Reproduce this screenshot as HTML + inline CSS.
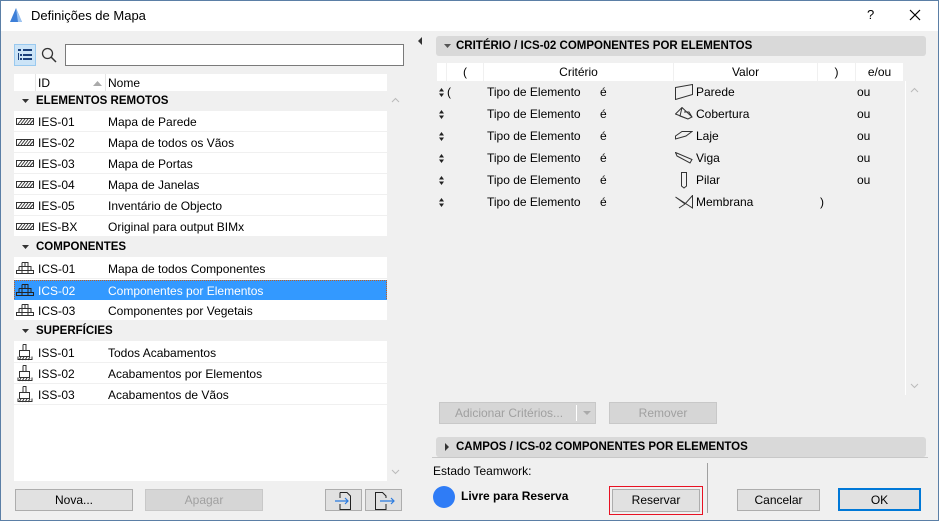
<!DOCTYPE html>
<html><head><meta charset="utf-8"><style>
*{box-sizing:border-box;margin:0;padding:0}
body{width:939px;height:521px;overflow:hidden;font-family:"Liberation Sans",sans-serif;font-size:12px;color:#000;background:#f0f0f0;position:relative}
.a{position:absolute}
.win{left:0;top:0;width:939px;height:521px;border:1px solid #5b7fa6}
.title{left:1px;top:1px;width:937px;height:30px;background:#fff}
.row{position:absolute;left:14px;width:373px;height:21px;background:#fff;border-bottom:1px solid #f0f0f0}
.row span{position:absolute;top:4px}
.grp{position:absolute;left:14px;width:373px;height:20px;background:#f0f0f0;font-weight:bold;font-size:11.5px}
.grp span{position:absolute;top:4px}
.btn{position:absolute;height:22px;background:#e1e1e1;border:1px solid #adadad;text-align:center;line-height:20px}
.dis{color:#a0a0a0;background:#d6d6d6;border-color:#c8c8c8}
.bar{position:absolute;left:436px;width:490px;height:20px;background:#d9d9d9;border-radius:3px;font-weight:bold;font-size:11.5px}
.cr{position:absolute;height:22px;left:436px;width:470px}
.cr span{position:absolute;top:4px}
.th{position:absolute;top:63px;height:18px;background:#fff;text-align:center;line-height:18px}
.ud{position:absolute;left:3px;top:7px}
</style></head><body>
<div class="a win"></div>
<div class="a title"></div>
<svg class="a" style="left:8px;top:7px" width="16" height="16"><path d="M2 15 L8 1 L14 15 Z" fill="#3d7fd8"/><path d="M8 1 L14 15 L10 15 Z" fill="#9cc3f0"/></svg>
<div class="a" style="left:31px;top:8px;font-size:13px">Definições de Mapa</div>
<div class="a" style="left:867px;top:7px;font-size:13px">?</div>
<svg class="a" style="left:909px;top:9px" width="12" height="12"><path d="M1 1L11 11M11 1L1 11" stroke="#000" stroke-width="1.2"/></svg>

<div class="a" style="left:14px;top:44px;width:22px;height:22px;background:#cce4f7;border:1px solid #99c9ef"></div>
<svg class="a" style="left:17px;top:48px" width="16" height="14"><g fill="#1a3f7a"><rect x="1" y="1" width="3" height="2"/><rect x="6" y="1" width="9" height="2"/><rect x="1" y="5" width="1" height="7"/><rect x="3" y="6" width="2" height="2"/><rect x="6" y="6" width="9" height="2"/><rect x="3" y="10" width="2" height="2"/><rect x="6" y="10" width="9" height="2"/></g></svg>
<svg class="a" style="left:41px;top:47px" width="16" height="16"><circle cx="6.5" cy="6.5" r="5" fill="none" stroke="#333" stroke-width="1.3"/><path d="M10 10L15 15" stroke="#333" stroke-width="1.5"/></svg>
<div class="a" style="left:65px;top:44px;width:339px;height:22px;background:#fff;border:1px solid #7a7a7a"></div>

<div class="a" style="left:14px;top:74px;width:373px;height:17px;background:#fff"></div>
<div class="a" style="left:35px;top:74px;width:1px;height:17px;background:#e5e5e5"></div>
<div class="a" style="left:105px;top:74px;width:1px;height:17px;background:#e5e5e5"></div>
<div class="a" style="left:38px;top:76px">ID</div>
<svg class="a" style="left:93px;top:81px" width="9" height="6"><path d="M0 5L4.5 0L9 5Z" fill="#aaa"/></svg>
<div class="a" style="left:108px;top:76px">Nome</div>
<div class="a" style="left:14px;top:91px;width:373px;height:390px;background:#fff"></div>
<div class="a" style="left:388px;top:91px;width:13px;height:390px;background:#f0f0f0"></div>
<svg class="a" style="left:391px;top:97px" width="9" height="6"><path d="M1 5L4.5 1.5L8 5" stroke="#bbb" fill="none"/></svg>
<svg class="a" style="left:391px;top:469px" width="9" height="6"><path d="M1 1L4.5 4.5L8 1" stroke="#bbb" fill="none"/></svg>

<div class="grp" style="top:91px"><svg class="a" style="left:8px;top:8px" width="7" height="4"><path d="M0 0H7L3.5 4Z" fill="#333"/></svg><span style="left:22px">ELEMENTOS REMOTOS</span></div>
<div class="row" style="top:111px"><svg class="a" style="left:2px;top:7px" width="18" height="7"><rect x=".5" y=".5" width="17" height="6" fill="#fff" stroke="#333"/><path d="M2 6L6 1M5 6L9 1M8 6L12 1M11 6L15 1M14 6L17 2.5" stroke="#333"/></svg><span style="left:24px">IES-01</span><span style="left:94px">Mapa de Parede</span></div>
<div class="row" style="top:132px"><svg class="a" style="left:2px;top:7px" width="18" height="7"><rect x=".5" y=".5" width="17" height="6" fill="#fff" stroke="#333"/><path d="M2 6L6 1M5 6L9 1M8 6L12 1M11 6L15 1M14 6L17 2.5" stroke="#333"/></svg><span style="left:24px">IES-02</span><span style="left:94px">Mapa de todos os Vãos</span></div>
<div class="row" style="top:153px"><svg class="a" style="left:2px;top:7px" width="18" height="7"><rect x=".5" y=".5" width="17" height="6" fill="#fff" stroke="#333"/><path d="M2 6L6 1M5 6L9 1M8 6L12 1M11 6L15 1M14 6L17 2.5" stroke="#333"/></svg><span style="left:24px">IES-03</span><span style="left:94px">Mapa de Portas</span></div>
<div class="row" style="top:174px"><svg class="a" style="left:2px;top:7px" width="18" height="7"><rect x=".5" y=".5" width="17" height="6" fill="#fff" stroke="#333"/><path d="M2 6L6 1M5 6L9 1M8 6L12 1M11 6L15 1M14 6L17 2.5" stroke="#333"/></svg><span style="left:24px">IES-04</span><span style="left:94px">Mapa de Janelas</span></div>
<div class="row" style="top:195px"><svg class="a" style="left:2px;top:7px" width="18" height="7"><rect x=".5" y=".5" width="17" height="6" fill="#fff" stroke="#333"/><path d="M2 6L6 1M5 6L9 1M8 6L12 1M11 6L15 1M14 6L17 2.5" stroke="#333"/></svg><span style="left:24px">IES-05</span><span style="left:94px">Inventário de Objecto</span></div>
<div class="row" style="top:216px"><svg class="a" style="left:2px;top:7px" width="18" height="7"><rect x=".5" y=".5" width="17" height="6" fill="#fff" stroke="#333"/><path d="M2 6L6 1M5 6L9 1M8 6L12 1M11 6L15 1M14 6L17 2.5" stroke="#333"/></svg><span style="left:24px">IES-BX</span><span style="left:94px">Original para output BIMx</span></div>

<div class="grp" style="top:237px"><svg class="a" style="left:8px;top:8px" width="7" height="4"><path d="M0 0H7L3.5 4Z" fill="#333"/></svg><span style="left:22px">COMPONENTES</span></div>
<div class="row" style="top:258px"><svg class="a" style="left:2px;top:4px" width="18" height="12"><path d="M6 .5H12V4.5M3 4.5H15V8.5M.5 8.5H17.5V11.5H.5ZM3 4.5V8.5M9 .5V4.5M6 4.5V8.5M12 4.5V8.5M6 8.5V11.5M12 8.5V11.5M6 .5V4.5" stroke="#333" fill="none"/></svg><span style="left:24px">ICS-01</span><span style="left:94px">Mapa de todos Componentes</span></div>
<div class="row" style="top:280px;background:#3399ff;border:1px dotted #c06020;color:#fff"><svg class="a" style="left:1px;top:3px" width="18" height="12"><path d="M6 .5H12V4.5M3 4.5H15V8.5M.5 8.5H17.5V11.5H.5ZM3 4.5V8.5M9 .5V4.5M6 4.5V8.5M12 4.5V8.5M6 8.5V11.5M12 8.5V11.5M6 .5V4.5" stroke="#222" fill="none"/></svg><span style="left:23px;top:3px">ICS-02</span><span style="left:93px;top:3px">Componentes por Elementos</span></div>
<div class="row" style="top:300px"><svg class="a" style="left:2px;top:4px" width="18" height="12"><path d="M6 .5H12V4.5M3 4.5H15V8.5M.5 8.5H17.5V11.5H.5ZM3 4.5V8.5M9 .5V4.5M6 4.5V8.5M12 4.5V8.5M6 8.5V11.5M12 8.5V11.5M6 .5V4.5" stroke="#333" fill="none"/></svg><span style="left:24px">ICS-03</span><span style="left:94px">Componentes por Vegetais</span></div>

<div class="grp" style="top:321px"><svg class="a" style="left:8px;top:8px" width="7" height="4"><path d="M0 0H7L3.5 4Z" fill="#333"/></svg><span style="left:22px">SUPERFÍCIES</span></div>
<div class="row" style="top:342px"><svg class="a" style="left:3px;top:2px" width="16" height="18"><path d="M6 .5H9V6.5M6 .5V6.5M2.5 6.5H12.5V12.5H2.5Z" stroke="#333" fill="none"/><path d="M1 12.5V15.5H15V12.5M2 16L4 13M5 16L7 13M8 16L10 13M11 16L13 13" stroke="#333" fill="none"/></svg><span style="left:24px">ISS-01</span><span style="left:94px">Todos Acabamentos</span></div>
<div class="row" style="top:363px"><svg class="a" style="left:3px;top:2px" width="16" height="18"><path d="M6 .5H9V6.5M6 .5V6.5M2.5 6.5H12.5V12.5H2.5Z" stroke="#333" fill="none"/><path d="M1 12.5V15.5H15V12.5M2 16L4 13M5 16L7 13M8 16L10 13M11 16L13 13" stroke="#333" fill="none"/></svg><span style="left:24px">ISS-02</span><span style="left:94px">Acabamentos por Elementos</span></div>
<div class="row" style="top:384px"><svg class="a" style="left:3px;top:2px" width="16" height="18"><path d="M6 .5H9V6.5M6 .5V6.5M2.5 6.5H12.5V12.5H2.5Z" stroke="#333" fill="none"/><path d="M1 12.5V15.5H15V12.5M2 16L4 13M5 16L7 13M8 16L10 13M11 16L13 13" stroke="#333" fill="none"/></svg><span style="left:24px">ISS-03</span><span style="left:94px">Acabamentos de Vãos</span></div>

<div class="btn" style="left:15px;top:489px;width:118px">Nova...</div>
<div class="btn dis" style="left:145px;top:489px;width:118px">Apagar</div>
<div class="btn" style="left:325px;top:489px;width:37px"><svg class="a" style="left:8px;top:2px" width="22" height="18"><path d="M6 .5H13L16.5 4V17.5H6V12M6 6V.5" stroke="#222" fill="none"/><path d="M1 9H14M11 6L14 9L11 12" stroke="#2a7be0" fill="none" stroke-width="1.2"/></svg></div>
<div class="btn" style="left:365px;top:489px;width:37px"><svg class="a" style="left:8px;top:2px" width="22" height="18"><path d="M12 6V4L8.5 .5H1.5V17.5H12V12" stroke="#222" fill="none"/><path d="M6 9H20M17 6L20 9L17 12" stroke="#2a7be0" fill="none" stroke-width="1.2"/></svg></div>

<svg class="a" style="left:418px;top:37px" width="5" height="8"><path d="M4 0V8L0 4Z" fill="#333"/></svg>
<div class="a" style="left:424px;top:31px;width:514px;height:489px;background:#f0f0f0"></div>

<div class="bar" style="top:36px"><svg class="a" style="left:8px;top:8px" width="7" height="4"><path d="M0 0H7L3.5 4Z" fill="#555"/></svg><span class="a" style="left:20px;top:4px">CRITÉRIO / ICS-02 COMPONENTES POR ELEMENTOS</span></div>
<div class="th" style="left:437px;width:9px"></div>
<div class="th" style="left:447px;width:36px">(</div>
<div class="th" style="left:484px;width:189px">Critério</div>
<div class="th" style="left:674px;width:143px">Valor</div>
<div class="th" style="left:818px;width:37px">)</div>
<div class="th" style="left:856px;width:47px">e/ou</div>
<div class="a" style="left:905px;top:81px;width:1px;height:314px;background:#fff"></div>
<svg class="a" style="left:910px;top:87px" width="9" height="6"><path d="M1 5L4.5 1.5L8 5" stroke="#bbb" fill="none"/></svg>
<svg class="a" style="left:910px;top:383px" width="9" height="6"><path d="M1 1L4.5 4.5L8 1" stroke="#bbb" fill="none"/></svg>

<div class="cr" style="top:81px"><svg class="ud" width="5" height="9"><path d="M0 3.5H5L2.5 0ZM0 5.5H5L2.5 9Z" fill="#222"/></svg><span style="left:11px">(</span><span style="left:51px">Tipo de Elemento</span><span style="left:164px">é</span><svg class="a" style="left:239px;top:3px" width="18" height="16"><path d="M.5 3.5L17.5 .5V10.5L.5 15.5Z" stroke="#333" fill="none"/></svg><span style="left:260px">Parede</span><span style="left:421px">ou</span></div>
<div class="cr" style="top:103px"><svg class="ud" width="5" height="9"><path d="M0 3.5H5L2.5 0ZM0 5.5H5L2.5 9Z" fill="#222"/></svg><span style="left:51px">Tipo de Elemento</span><span style="left:164px">é</span><svg class="a" style="left:239px;top:4px" width="18" height="14"><path d="M.5 7L7 .5L17 10L13 12Z M7 .5L5 9L13 12M9 5H14L17 10" stroke="#333" fill="none"/></svg><span style="left:260px">Cobertura</span><span style="left:421px">ou</span></div>
<div class="cr" style="top:125px"><svg class="ud" width="5" height="9"><path d="M0 3.5H5L2.5 0ZM0 5.5H5L2.5 9Z" fill="#222"/></svg><span style="left:51px">Tipo de Elemento</span><span style="left:164px">é</span><svg class="a" style="left:239px;top:6px" width="18" height="10"><path d="M.5 5L7 .5H17L11 5L.5 8Z M.5 5V8" stroke="#333" fill="none"/></svg><span style="left:260px">Laje</span><span style="left:421px">ou</span></div>
<div class="cr" style="top:147px"><svg class="ud" width="5" height="9"><path d="M0 3.5H5L2.5 0ZM0 5.5H5L2.5 9Z" fill="#222"/></svg><span style="left:51px">Tipo de Elemento</span><span style="left:164px">é</span><svg class="a" style="left:239px;top:5px" width="18" height="12"><path d="M.5 .5L17 7.5L15 11L2 4Z" stroke="#333" fill="none"/></svg><span style="left:260px">Viga</span><span style="left:421px">ou</span></div>
<div class="cr" style="top:169px"><svg class="ud" width="5" height="9"><path d="M0 3.5H5L2.5 0ZM0 5.5H5L2.5 9Z" fill="#222"/></svg><span style="left:51px">Tipo de Elemento</span><span style="left:164px">é</span><svg class="a" style="left:244px;top:2px" width="8" height="18"><path d="M1.5 1.5H6.5V15L4 17L1.5 15Z" stroke="#333" fill="none"/></svg><span style="left:260px">Pilar</span><span style="left:421px">ou</span></div>
<div class="cr" style="top:191px"><svg class="ud" width="5" height="9"><path d="M0 3.5H5L2.5 0ZM0 5.5H5L2.5 9Z" fill="#222"/></svg><span style="left:51px">Tipo de Elemento</span><span style="left:164px">é</span><svg class="a" style="left:239px;top:4px" width="18" height="14"><path d="M.5 2L10 9L17.5 .5V13L.5 2Z M4 13L10 9" stroke="#333" fill="none"/></svg><span style="left:260px">Membrana</span><span style="left:384px">)</span></div>

<div class="btn dis" style="left:439px;top:402px;width:157px;text-align:left;padding-left:15px">Adicionar Critérios...<span class="a" style="left:136px;top:2px;width:1px;height:16px;background:#fff"></span><svg class="a" style="left:143px;top:8px" width="8" height="5"><path d="M0 0H8L4 4Z" fill="#aaa"/></svg></div>
<div class="btn dis" style="left:609px;top:402px;width:108px">Remover</div>

<div class="bar" style="top:437px"><svg class="a" style="left:9px;top:6px" width="4" height="8"><path d="M0 0L4 4L0 8Z" fill="#333"/></svg><span class="a" style="left:20px;top:4px">CAMPOS / ICS-02 COMPONENTES POR ELEMENTOS</span></div>
<div class="a" style="left:432px;top:457px;width:496px;height:1px;background:#c8c8c8"></div>
<div class="a" style="left:433px;top:464px">Estado Teamwork:</div>
<div class="a" style="left:433px;top:486px;width:22px;height:22px;border-radius:50%;background:#2f7cf6"></div>
<div class="a" style="left:461px;top:489px;font-weight:bold">Livre para Reserva</div>
<div class="a" style="left:609px;top:486px;width:94px;height:29px;border:1px solid #e81123"></div>
<div class="btn" style="left:612px;top:489px;width:88px;height:23px">Reservar</div>
<div class="a" style="left:707px;top:463px;width:1px;height:50px;background:#a0a0a0"></div>
<div class="btn" style="left:737px;top:489px;width:83px">Cancelar</div>
<div class="btn" style="left:838px;top:488px;width:83px;height:23px;border:2px solid #0078d7">OK</div>
</body></html>
